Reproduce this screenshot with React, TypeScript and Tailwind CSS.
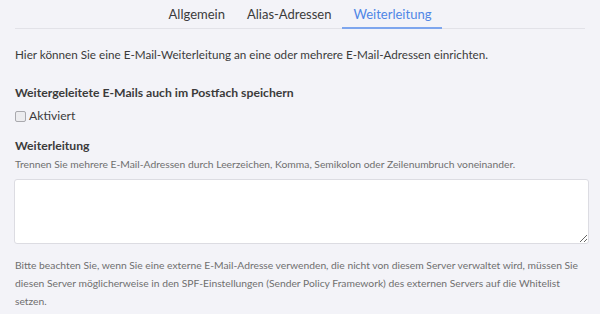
import { useState } from 'react';

const tabs = ['Allgemein', 'Alias-Adressen', 'Weiterleitung'];

export default function App() {
  const [active, setActive] = useState('Weiterleitung');
  const [keep, setKeep] = useState(false);

  return (
    <div className="min-h-[314px] bg-[#f3f3f8] px-[15px] text-[#3b3b3b] font-['Lato',sans-serif]">
      {/* Tabs */}
      <div className="flex justify-center border-b border-[#e2e2e8] pt-[2px]">
        {tabs.map((t) => (
          <button
            key={t}
            onClick={() => setActive(t)}
            className={`px-[11px] h-[27px] text-[13px] -mb-px border-b-2 ${
              active === t ? 'text-[#4f86e6] border-[#7ea6ee]' : 'text-[#3b3b3b] border-transparent'
            }`}
          >
            {t}
          </button>
        ))}
      </div>

      <p className="mt-[16px] text-[11.7px] leading-[18px]">
        Hier können Sie eine E-Mail-Weiterleitung an eine oder mehrere E-Mail-Adressen einrichten.
      </p>

      {/* Keep copy */}
      <h3 className="mt-[21px] text-[12.2px] leading-[18px] font-bold">Weitergeleitete E-Mails auch im Postfach speichern</h3>
      <label className="mt-[5px] flex items-center gap-[3px] text-[12.2px] leading-[18px]">
        <input
          type="checkbox"
          checked={keep}
          onChange={(e) => setKeep(e.target.checked)}
          className="appearance-none w-[11px] h-[11px] border border-[#a9a9ae] rounded-[2px] bg-[#ececef] checked:bg-[#4f86e6] checked:border-[#4f86e6]"
        />
        Aktiviert
      </label>

      {/* Forwarding */}
      <h3 className="mt-[12px] text-[12.2px] leading-[18px] font-bold">Weiterleitung</h3>
      <p className="text-[10.3px] leading-[18px] text-[#6f6f6f]">
        Trennen Sie mehrere E-Mail-Adressen durch Leerzeichen, Komma, Semikolon oder Zeilenumbruch voneinander.
      </p>
      <textarea className="mt-[6px] -ml-px block w-[575px] h-[65px] bg-white border border-[#dcdce2] rounded-[3px]" />

      <p className="mt-[12px] text-[10.3px] leading-[18px] text-[#6f6f6f]">
        Bitte beachten Sie, wenn Sie eine externe E-Mail-Adresse verwenden, die nicht von diesem Server verwaltet wird, müssen Sie
        diesen Server möglicherweise in den SPF-Einstellungen (Sender Policy Framework) des externen Servers auf die Whitelist
        setzen.
      </p>
    </div>
  );
}
